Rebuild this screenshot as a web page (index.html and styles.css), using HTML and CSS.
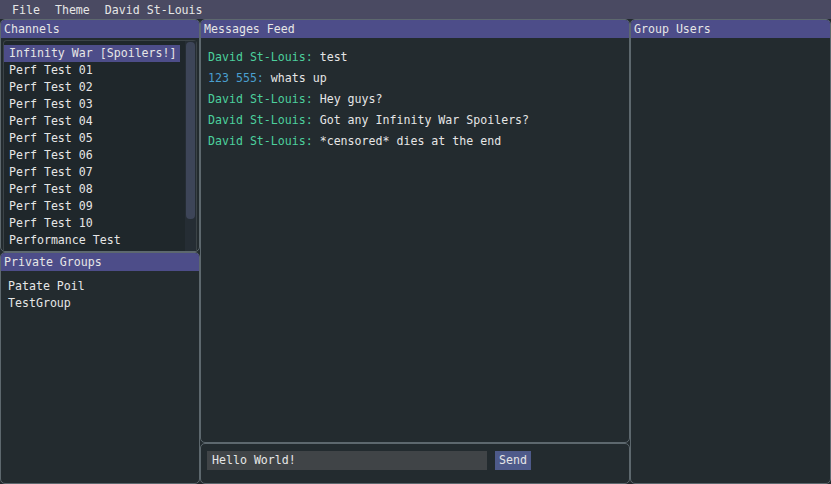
FILE: index.html
```html
<!DOCTYPE html>
<html>
<head>
<meta charset="utf-8">
<link rel="stylesheet" href="styles.css">
</head>
<body>
<div class="menubar">
  <span class="menu-item">File</span>
  <span class="menu-item">Theme</span>
  <span class="menu-item">David St-Louis</span>
</div>
<div class="main">
  <div class="col left">
    <div class="window channels">
      <div class="title">Channels</div>
      <div class="child">
        <div class="list">
          <div class="item selected">Infinity War [Spoilers!]</div>
          <div class="item">Perf Test 01</div>
          <div class="item">Perf Test 02</div>
          <div class="item">Perf Test 03</div>
          <div class="item">Perf Test 04</div>
          <div class="item">Perf Test 05</div>
          <div class="item">Perf Test 06</div>
          <div class="item">Perf Test 07</div>
          <div class="item">Perf Test 08</div>
          <div class="item">Perf Test 09</div>
          <div class="item">Perf Test 10</div>
          <div class="item">Performance Test</div>
        </div>
        <div class="scrollbar"><div class="grab"></div></div>
      </div>
    </div>
    <div class="window groups">
      <div class="title">Private Groups</div>
      <div class="glist">
        <div class="item">Patate Poil</div>
        <div class="item">TestGroup</div>
      </div>
    </div>
  </div>
  <div class="col middle">
    <div class="window feed">
      <div class="title">Messages Feed</div>
      <div class="messages">
        <div class="msg"><span class="name">David St-Louis:</span> test</div>
        <div class="msg"><span class="name other">123 555:</span> whats up</div>
        <div class="msg"><span class="name">David St-Louis:</span> Hey guys?</div>
        <div class="msg"><span class="name">David St-Louis:</span> Got any Infinity War Spoilers?</div>
        <div class="msg"><span class="name">David St-Louis:</span> *censored* dies at the end</div>
      </div>
    </div>
    <div class="window inputwin">
      <div class="input">Hello World!</div>
      <div class="button">Send</div>
    </div>
  </div>
  <div class="col right">
    <div class="window users">
      <div class="title">Group Users</div>
    </div>
  </div>
</div>
</body>
</html>
```
FILE: styles.css
```css
html, body {
  margin: 0;
  padding: 0;
}
body {
  width: 831px;
  height: 484px;
  overflow: hidden;
  background: #232b2f;
  font-family: "DejaVu Sans Mono", "Liberation Mono", monospace;
  font-size: 11.6px;
  color: #e6e6e6;
  display: flex;
  flex-direction: column;
}
.menubar {
  height: 19px;
  background: #4a4a62;
  display: flex;
  align-items: center;
  padding-left: 12px;
  gap: 15px;
  flex-shrink: 0;
}
.main {
  flex: 1;
  display: flex;
  min-height: 0;
}
.col {
  display: flex;
  flex-direction: column;
}
.left { width: 200px; }
.middle { width: 430px; }
.right { width: 201px; }
.window {
  box-sizing: border-box;
  border: 1px solid #5d686e;
  border-radius: 5px;
  background: #232b2f;
  display: flex;
  flex-direction: column;
  overflow: hidden;
}
.title {
  height: 18px;
  background: #4d4d89;
  padding-left: 3px;
  line-height: 18px;
  flex-shrink: 0;
}
.channels { height: 233px; }
.groups { flex: 1; }
.child {
  flex: 1;
  margin: 2px 2px 0 2px;
  border: 1px solid #3b4347;
  border-bottom: none;
  border-radius: 4px 4px 0 0;
  background: #1f272b;
  display: flex;
  min-height: 0;
}
.list {
  flex: 1;
  padding: 4px 4px 0 0;
  overflow: hidden;
}
.item {
  height: 17px;
  line-height: 17px;
  padding-left: 4px;
}
.list .item { padding-left: 5px; }
.item.selected {
  background: #4d4d89;
  width: 171px;
}
.scrollbar {
  width: 11px;
  background: #252d34;
  padding: 1px 1px;
  box-sizing: border-box;
}
.grab {
  height: 177px;
  background: #3d4558;
  border-radius: 4px;
}
.glist {
  padding: 7px 3px;
}
.feed { flex: 1; }
.messages {
  padding: 9px 7px;
}
.msg {
  height: 21px;
  line-height: 21px;
}
.name { color: #4cd09d; }
.name.other { color: #4a9fcf; }
.inputwin {
  height: 41px;
  flex-shrink: 0;
  flex-direction: row;
  align-items: flex-start;
  padding: 7px 6px 0 6px;
  gap: 8px;
}
.input {
  width: 280px;
  height: 19px;
  line-height: 19px;
  background: #404447;
  padding-left: 5px;
  box-sizing: border-box;
}
.button {
  height: 19px;
  line-height: 19px;
  background: #4e5a8a;
  padding: 0 4px;
}
.users { flex: 1; }
```
